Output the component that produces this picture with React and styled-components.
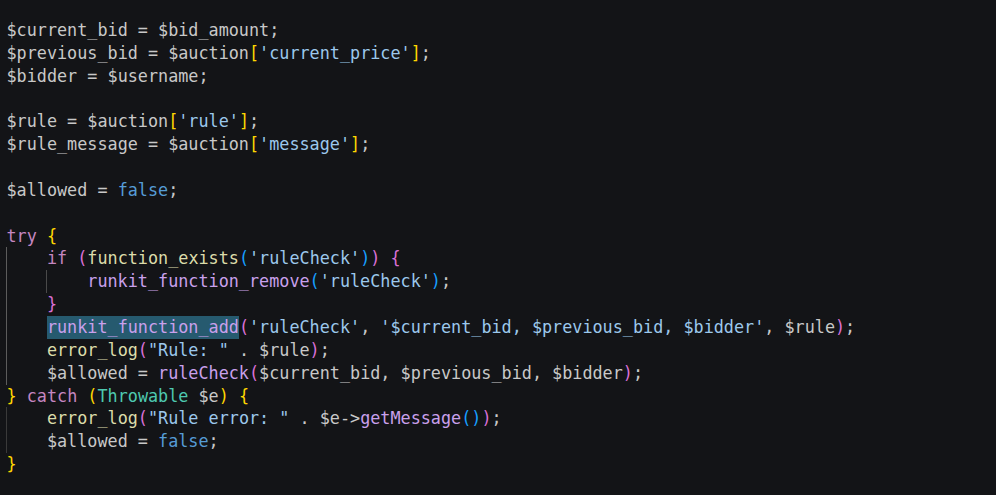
import styled, { createGlobalStyle } from 'styled-components';

const GlobalStyle = createGlobalStyle`
    html, body {
        margin: 0;
        padding: 0;
        background: #131417;
    }
`

const colors = {
    plain: "#c8c8c8",
    str: "#9cc8ec",
    kw: "#c586c0",
    fn: "#dcdcaa",
    call: "#c9a0ec",
    bool: "#569cd6",
    type: "#4ec9b0",
    b1: "#ffd700",
    b2: "#da70d6",
    b3: "#179fff",
}

let Editor = styled.div`
    width: 996px;
    height: 495px;
    box-sizing: border-box;
    padding: 19px 0 0 6.5px;
    background-color: #131417;
    font-family: "DejaVu Sans Mono", monospace;
    font-size: 16.8px;
    overflow: hidden;
`

let Line = styled.div`
    display: flex;
    height: 22.85px;
    line-height: 22.85px;
    white-space: pre;
    color: ${colors.plain};
`

let Indent = styled.span`
    width: 4ch;
    border-left: 1px solid ${props => props.$guide};
    margin-left: -0.5px;
    margin-right: -0.5px;
`

let Token = styled.span`
    color: ${props => colors[props.$kind] || colors.plain};
    background-color: ${props => props.$sel ? "#265a6f" : "transparent"};
`

// [kind, text] pairs per line, indent = number of guide columns
const code = [
    { tokens: [["plain", "$current_bid = $bid_amount;"]] },
    { tokens: [["plain", "$previous_bid = $auction"], ["b1", "["], ["str", "'current_price'"], ["b1", "]"], ["plain", ";"]] },
    { tokens: [["plain", "$bidder = $username;"]] },
    { tokens: [] },
    { tokens: [["plain", "$rule = $auction"], ["b1", "["], ["str", "'rule'"], ["b1", "]"], ["plain", ";"]] },
    { tokens: [["plain", "$rule_message = $auction"], ["b1", "["], ["str", "'message'"], ["b1", "]"], ["plain", ";"]] },
    { tokens: [] },
    { tokens: [["plain", "$allowed = "], ["bool", "false"], ["plain", ";"]] },
    { tokens: [] },
    { tokens: [["kw", "try"], ["plain", " "], ["b1", "{"]] },
    { indent: 1, guide: "#5c5c5c", tokens: [["kw", "if"], ["plain", " "], ["b2", "("], ["fn", "function_exists"], ["b3", "("], ["str", "'ruleCheck'"], ["b3", ")"], ["b2", ")"], ["plain", " "], ["b2", "{"]] },
    { indent: 2, guide: "#5c5c5c", tokens: [["call", "runkit_function_remove"], ["b3", "("], ["str", "'ruleCheck'"], ["b3", ")"], ["plain", ";"]] },
    { indent: 1, guide: "#5c5c5c", tokens: [["b2", "}"]] },
    { indent: 1, guide: "#5c5c5c", tokens: [["call", "runkit_function_add", true], ["b2", "("], ["str", "'ruleCheck'"], ["plain", ", "], ["str", "'$current_bid, $previous_bid, $bidder'"], ["plain", ", $rule"], ["b2", ")"], ["plain", ";"]] },
    { indent: 1, guide: "#5c5c5c", tokens: [["fn", "error_log"], ["b2", "("], ["str", "\"Rule: \""], ["plain", " . $rule"], ["b2", ")"], ["plain", ";"]] },
    { indent: 1, guide: "#5c5c5c", tokens: [["plain", "$allowed = "], ["call", "ruleCheck"], ["b2", "("], ["plain", "$current_bid, $previous_bid, $bidder"], ["b2", ")"], ["plain", ";"]] },
    { tokens: [["b1", "}"], ["plain", " "], ["kw", "catch"], ["plain", " "], ["b1", "("], ["type", "Throwable"], ["plain", " $e"], ["b1", ")"], ["plain", " "], ["b1", "{"]] },
    { indent: 1, guide: "#3a3a3a", tokens: [["fn", "error_log"], ["b2", "("], ["str", "\"Rule error: \""], ["plain", " . $e->"], ["call", "getMessage"], ["b3", "()"], ["b2", ")"], ["plain", ";"]] },
    { indent: 1, guide: "#3a3a3a", tokens: [["plain", "$allowed = "], ["bool", "false"], ["plain", ";"]] },
    { tokens: [["b1", "}"]] },
]

function App() {
    return (
        <>
            <GlobalStyle />
            <Editor>
                {code.map((line, i) => (
                    <Line key={i}>
                        {Array.from({ length: line.indent || 0 }).map((_, k) => (
                            <Indent key={"i" + k} $guide={k === 0 ? line.guide : "#4a4a4a"} />
                        ))}
                        {line.tokens.map(([kind, text, sel], j) => (
                            <Token key={j} $kind={kind} $sel={sel}>{text}</Token>
                        ))}
                    </Line>
                ))}
            </Editor>
        </>
    )
}

export default App
